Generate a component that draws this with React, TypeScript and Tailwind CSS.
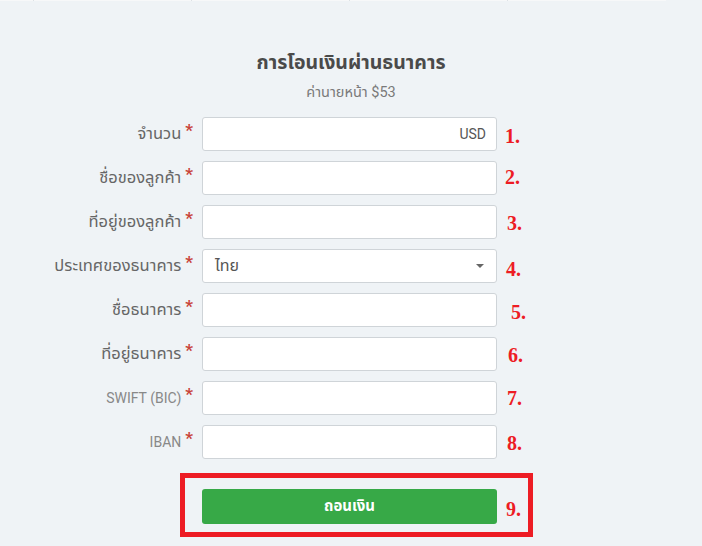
import React from "react";

const FONT = "Roboto, 'Noto Sans Thai', 'Noto Sans Thai UI', 'Noto Sans', 'DejaVu Sans', sans-serif";

type Row = { label: string; n: string; value?: string; select?: boolean; latin?: boolean; dy: number; dx: number };

const rows: Row[] = [
  { label: "จำนวน", n: "1.", value: "USD", dy: 2, dx: 0 },
  { label: "ชื่อของลูกค้า", n: "2.", dy: -1, dx: 0 },
  { label: "ที่อยู่ของลูกค้า", n: "3.", dy: 1, dx: 2 },
  { label: "ประเทศของธนาคาร", n: "4.", select: true, dy: 3, dx: 1 },
  { label: "ชื่อธนาคาร", n: "5.", dy: 2, dx: 6 },
  { label: "ที่อยู่ธนาคาร", n: "6.", dy: 1, dx: 3 },
  { label: "SWIFT (BIC)", n: "7.", latin: true, dy: 0, dx: 2 },
  { label: "IBAN", n: "8.", latin: true, dy: 1, dx: 2 },
];

export default function App() {
  return (
    <div className="min-h-[546px] w-[702px] bg-[#eff3f6] relative" style={{ fontFamily: FONT }}>
      <div className="flex h-px w-[666px] bg-[#f7f8f9]">
        <div className="w-[34px] border-r border-[#dde2e6]" />
        <div className="w-[158px] border-r border-[#dde2e6]" />
        <div className="w-[158px] border-r border-[#dde2e6]" />
        <div className="w-[158px] border-r border-[#dde2e6]" />
      </div>
      <div className="flex flex-col items-center pt-[49px]">
        <h1 className="text-[19.5px] font-bold text-[#4a4a4a] leading-[26px]">การโอนเงินผ่านธนาคาร</h1>
        <div className="mt-[7px] text-[14.5px] text-[#7a7a7a] leading-[20px]">ค่านายหน้า $53</div>
      </div>
      <div className="mt-[14px] flex flex-col gap-[10px]">
        {rows.map((r) => (
          <div key={r.n} className="flex items-center h-[34px]">
            <div className="w-[195px] flex justify-end items-center pr-[2px]">
              <span className={r.latin ? "text-[14px] text-[#888]" : "text-[16.5px] text-[#666]"}>{r.label}</span>
              <span className="ml-[4px] text-[17px] leading-none text-[#c9443a] -translate-y-[4px] font-bold">*</span>
            </div>
            <div className="ml-[7px] w-[295px] h-[34px] bg-white border border-[#cfd4d8] rounded-[3px] flex items-center pl-[12px] pr-[10px] text-[14px] text-[#555]">
              {r.value ? <span className="ml-auto">{r.value}</span> : null}
              {r.select ? (
                <>
                  <span className="text-[16px]">ไทย</span>
                  <span className="ml-auto mr-[2px] w-0 h-0 border-l-[4px] border-r-[4px] border-t-[4px] border-l-transparent border-r-transparent border-t-[#666]" />
                </>
              ) : null}
            </div>
            <span
              className="ml-[8px] text-[20px] font-bold text-[#ed1c24] leading-none"
              style={{ fontFamily: "'Liberation Serif', serif", transform: `translate(${r.dx}px, ${r.dy}px)` }}
            >
              {r.n}
            </span>
          </div>
        ))}
      </div>
      <div className="relative mt-[30px] flex items-center h-[35px]">
        <div className="absolute left-[180px] top-[-16px] w-[353px] h-[64px] border-[5px] border-[#ed1c24]" />
        <button className="ml-[202px] w-[295px] h-[35px] bg-[#37a947] rounded-[3px] text-white text-[15px] font-bold">ถอนเงิน</button>
        <span className="ml-[9px] text-[20px] font-bold text-[#ed1c24] leading-none translate-y-[2px]" style={{ fontFamily: "'Liberation Serif', serif" }}>9.</span>
      </div>
    </div>
  );
}
